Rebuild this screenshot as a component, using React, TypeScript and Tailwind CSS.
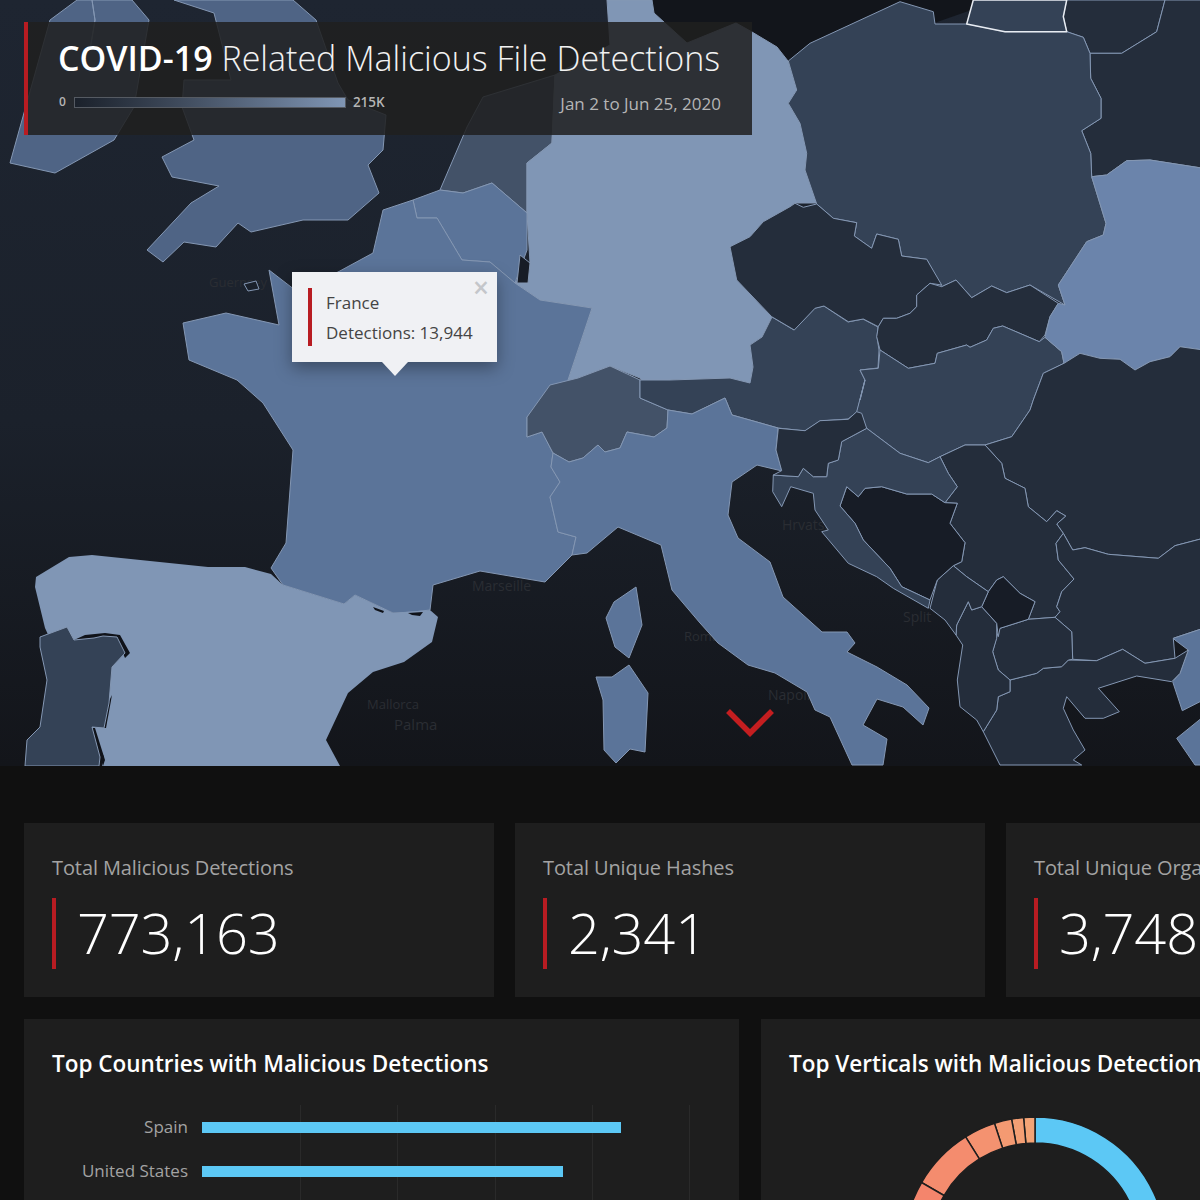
const pts = (s: string, ox: number, oy: number, sx: number, sy: number) =>
  s
    .trim()
    .split(/\s+/)
    .map((p) => {
      const [x, y] = p.split(",").map(Number);
      return `${(ox + x / sx).toFixed(1)},${(oy + y / sy).toFixed(1)}`;
    })
    .join(" ");

const z3 = (s: string) => pts(s, 700, 0, 3, 3);
const z4 = (s: string) => pts(s, 700, 380, 3, 3);

const LIGHT = "#8096b5";
const MID = "#5b7499";
const BLUE = "#6b84ab";
const UK = "#4f6485";
const SWISS = "#435268";
const SLATE = "#344256";
const DARK = "#242d3b";
const DARKEST = "#171c26";
const GAP = "#10131a";

const regions: { fill: string; points: string; stroke?: string }[] = [
  { fill: "#12151b", points: "640,0 1000,0 800,70 788,61 736,23 687,43", stroke: "none" },
  { fill: UK, points: "77,0 50,20 10,163 55,173 114,140 134,107 149,20 132,0" },
  { fill: "none", points: "92,0 95,20 90,50 95,20" },
  { fill: UK, points: "174,0 214,13 231,80 184,80 182,107 194,140 162,157 172,177 219,186 191,203 147,250 163,262 184,242 216,247 238,223 251,232 303,220 348,220 379,193 368,165 383,150 386,115 348,100 338,83 316,20 293,0" },
  { fill: SWISS, points: "483,97 555,75 552,143 527,163 527,213 492,183 463,193 440,190 467,127" },
  { fill: LIGHT, points: "555,75 610,45 607,0 652,0 654,13 687,43 736,23 752,32 777,47 788,61 797,90 788,103 800,123 807,153 805,170 817,203 795,203 790,207 763,222 750,237 730,247 737,280 772,317 762,337 750,345 753,367 750,383 730,378 670,380 645,385 640,378 610,366 578,378 567,383 592,308 540,300 515,283 530,263 527,213 527,163 552,143" },
  { fill: MID, points: "413,200 440,190 463,193 492,183 527,213 527,250 515,283 490,262 462,260 437,218 417,218" },
  { fill: DARKEST, points: "520,255 530,263 528,283 517,283" },
  { fill: MID, points: "413,200 417,218 437,218 462,260 490,262 515,283 540,300 592,308 567,383 551,390 527,417 527,437 542,432 553,453 551,467 560,482 550,497 558,532 576,537 572,555 545,582 480,571 433,585 430,610 413,612 393,613 355,595 344,604 283,585 271,568 286,543 293,450 263,403 237,380 189,360 183,323 226,313 279,325 269,270 295,290 338,272 373,253 383,210" },
  { fill: LIGHT, points: "36,577 69,557 92,555 208,567 245,567 271,574 283,585 344,604 355,595 393,613 430,610 438,617 432,642 404,662 373,672 348,693 326,740 340,766 102,766 104,757 92,730 45,628 35,587", stroke: "none" },
  { fill: GAP, points: "74,640 85,635 105,633 120,635 130,653 125,658 117,640 103,640 94,641", stroke: "none" },
  { fill: GAP, points: "108,703 112,695 106,728 103,728", stroke: "none" },
  { fill: GAP, points: "92,728 95,728 105,760 103,766", stroke: "none" },
  { fill: GAP, points: "373,607 384,611 383,613 375,610", stroke: "none" },
  { fill: GAP, points: "408,613 423,612 420,616 412,615", stroke: "none" },
  { fill: SLATE, points: "40,637 67,627 74,640 94,638 103,636 117,637 125,653 112,667 109,703 104,728 92,727 100,757 99,766 25,766 27,740 40,727 47,680 40,647" },
  { fill: SWISS, points: "527,417 550,385 578,378 610,366 640,380 640,398 668,410 667,428 654,437 627,432 620,448 605,452 598,445 583,458 569,462 553,453 542,432 527,437" },
  { fill: SLATE, points: "640,380 670,380 730,378 750,383 753,367 750,345 762,337 772,317 794,330 815,308 824,306 848,322 863,319 878,327 877,337 879,350 878,368 860,370 865,380 857,412 848,419 820,421 805,431 778,428 732,415 725,398 692,414 668,410 640,398" },
  { fill: MID, points: "553,453 569,462 583,458 598,445 605,452 620,448 627,432 654,437 667,428 668,410 692,414 725,398 732,415 778,428 776,450 782,471 757,465 732,482 728,515 738,538 770,562 783,597 822,632 847,632 855,643 847,652 877,667 907,685 929,708 923,725 903,707 877,699 863,725 887,739 883,765 852,765 830,717 815,710 807,692 775,673 748,665 718,643 700,623 672,590 661,545 618,527 587,553 572,555 576,537 558,532 550,497 560,482 551,467" },
  { fill: MID, points: "636,587 642,625 629,658 615,647 606,618 614,602" },
  { fill: MID, points: "629,665 648,693 645,752 630,749 616,763 604,750 603,700 596,677 612,677" },
  { fill: DARK, points: z3("1100,0 1090,50 1100,95 1150,112 1170,160 1265,160 1370,95 1395,0") },
  { fill: DARK, points: z3("1395,0 1370,95 1265,160 1170,160 1172,235 1203,295 1203,355 1145,392 1172,460 1175,530 1220,525 1280,482 1350,480 1510,505 1510,0") },
  { fill: SLATE, points: z3("265,183 330,130 600,5 700,35 705,72 800,72 915,95 1100,95 1150,112 1170,160 1172,235 1203,295 1203,355 1145,392 1172,460 1175,530 1218,670 1210,705 1160,725 1075,855 1095,915 990,855 920,878 875,858 815,893 768,840 725,860 680,778 605,768 595,718 530,702 515,745 463,708 470,668 400,655 350,612 315,510 320,460 300,370 265,310 290,270") },
  { fill: SLATE, stroke: "#e8ecf2", points: z3("820,0 800,72 915,95 1100,95 1090,50 1100,0") },
  { fill: DARK, points: z3("90,740 150,710 190,665 270,620 285,610 310,622 350,612 400,655 470,668 463,708 515,745 530,702 595,718 605,768 680,778 725,855 690,850 650,885 650,920 630,940 590,955 550,955 535,980 490,957 445,965 372,918 345,925 283,990 215,950 110,840") },
  { fill: DARK, points: z3("725,860 768,840 815,893 875,858 920,878 990,855 1075,910 1050,950 1035,1005 1018,1025 908,978 880,985 860,1020 810,1042 800,1035 712,1060 705,1090 625,1105 540,1050 530,1010 535,980 550,955 590,955 630,940 650,920 650,885 690,850") },
  { fill: SLATE, points: z3("540,1050 625,1105 705,1090 712,1060 800,1035 810,1042 860,1020 880,985 908,978 1018,1025 1035,1012 1085,1055 1092,1090 1030,1120 1000,1200") + " " + z4("990,90 935,170 855,195 795,195 720,230 685,248 600,220 500,145 470,95 495,0") + " " + z3("480,1200 495,1140 480,1110 535,1105") },
  { fill: BLUE, points: z3("1175,530 1220,525 1280,482 1350,480 1510,505 1510,1050 1440,1040 1410,1070 1350,1085 1305,1110 1260,1078 1200,1075 1140,1060 1092,1090 1085,1055 1035,1012 1050,950 1075,910 1095,915 1075,855 1160,725 1210,705 1218,670") },
  { fill: DARK, points: z3("1000,1200 1030,1120 1092,1090 1140,1060 1200,1075 1260,1078 1305,1110 1350,1085 1410,1070 1440,1040 1510,1050 1510,1200") + " " + z4("1510,475 1425,497 1375,535 1225,523 1155,503 1118,510 1090,460 1070,432 1097,408 1070,392 1040,425 985,380 975,325 915,295 905,250 855,195 935,170 990,90") },
  { fill: DARK, points: z4("720,230 795,195 855,195 905,250 915,295 975,325 985,380 1040,425 1070,392 1097,408 1070,432 1090,460 1068,490 1075,540 1122,597 1085,635 1070,680 1080,695 1065,712 985,718 1005,665 960,640 910,590 890,600 865,635 800,590 760,557 785,545 795,488 750,430 772,370 735,368 772,320 745,280") },
  { fill: DARK, points: z4("1090,460 1118,510 1155,503 1225,523 1375,535 1425,497 1510,475 1510,745 1420,775 1425,835 1335,850 1268,808 1190,842 1118,838 1115,755 1065,712 1080,695 1070,680 1085,635 1122,597 1075,540 1068,490") },
  { fill: MID, points: z4("1420,775 1510,745 1510,960 1447,992 1418,905 1440,880 1465,810 1425,780") },
  { fill: MID, points: z4("1430,1075 1510,1010 1510,1155 1485,1155") },
  { fill: DARK, points: z4("930,900 1010,880 1030,865 1085,860 1105,840 1190,842 1268,808 1335,850 1425,835 1465,810 1440,880 1415,905 1310,888 1195,925 1258,995 1210,1015 1155,1015 1100,950 1090,985 1120,1050 1155,1110 1120,1140 1145,1155 900,1155 850,1055 890,990 895,950 930,935") },
  { fill: DARK, points: z4("900,745 985,718 1065,712 1115,755 1118,838 1105,840 1085,860 1030,865 1010,880 930,900 895,870 885,840 878,815 890,770") },
  { fill: DARK, points: z4("770,735 805,665 815,690 845,680 890,730 890,775 878,815 895,870 930,900 930,935 895,950 890,990 850,1055 830,1020 780,980 772,900 788,795 768,765") },
  { fill: DARKEST, points: z4("845,680 865,635 890,600 910,590 960,640 1005,665 985,718 900,745 895,770 890,730") },
  { fill: DARK, points: z4("690,685 712,600 760,557 800,590 865,635 845,680 815,690 805,665 770,735 768,765 735,720") },
  { fill: DARKEST, points: z4("420,378 440,320 475,350 495,325 545,320 620,342 695,342 735,368 772,370 750,430 795,488 785,545 760,557 712,600 690,660 605,620 570,565 490,480 465,430") },
  { fill: SLATE, points: z4("500,145 600,220 685,248 720,230 745,280 772,320 735,368 695,342 620,342 545,320 495,325 475,350 440,320 420,378 465,430 490,480 570,565 605,620 690,660 685,685 580,625 530,590 445,550 365,455 385,450 345,390 340,340 272,320 245,380 218,335 220,285 295,290 310,265 340,290 380,290 385,250 415,240 425,185") },
  { fill: DARK, points: z4("235,145 315,152 360,122 445,118 470,95 485,100 500,145 425,185 415,240 385,250 380,290 340,290 310,265 295,290 220,285 245,272 228,210") },
];

const seaLabels = [
  { text: "Guernsey", x: 209, y: 287, size: 13 },
  { text: "Marseille", x: 472, y: 591, size: 14 },
  { text: "Mallorca", x: 367, y: 709, size: 13 },
  { text: "Palma", x: 394, y: 730, size: 15 },
  { text: "Hrvatska", x: 782, y: 530, size: 14 },
  { text: "Split", x: 903, y: 622, size: 14 },
  { text: "Napoli", x: 768, y: 700, size: 14 },
  { text: "Roma", x: 684, y: 641, size: 13 },
];

function EuropeMap() {
  return (
    <svg viewBox="0 0 1200 766" className="block h-[766px] w-[1200px]">
      <defs>
        <linearGradient id="sea" x1="0" y1="0" x2="0" y2="1">
          <stop offset="0" stopColor="#1e2531" />
          <stop offset="0.55" stopColor="#1b212b" />
          <stop offset="1" stopColor="#13151a" />
        </linearGradient>
      </defs>
      <rect width="1200" height="766" fill="url(#sea)" />
      {seaLabels.map((l) => (
        <text
          key={l.text}
          x={l.x}
          y={l.y}
          fontSize={l.size}
          fill="#2a2d33"
          fontFamily="'Open Sans', sans-serif"
        >
          {l.text}
        </text>
      ))}
      {regions.map((r, i) => (
        <polygon
          key={i}
          points={r.points}
          fill={r.fill}
          stroke={r.stroke ?? "#8497b3"}
          strokeWidth={r.stroke === "#e8ecf2" ? 1.5 : 1}
          strokeLinejoin="round"
        />
      ))}
      <polygon points="244,284 256,281 259,289 248,291" fill="#1b212b" stroke="#8497b3" />
    </svg>
  );
}

function StatCard({ label, value }: { label: string; value: string }) {
  return (
    <div className="h-[174px] w-[470px] shrink-0 bg-[#1e1e1e] pl-[28px] pt-[32px]">
      <div className="whitespace-nowrap text-[20px] leading-[26px] tracking-[-0.1px] text-[#a3a3a3]">{label}</div>
      <div className="mt-[17px] flex h-[71px] items-center border-l-[4px] border-[#b81c22] pb-[4px] pl-[21px] text-[56px] font-light leading-none tracking-[-0.2px] text-white">
        {value}
      </div>
    </div>
  );
}

function polar(r: number, deg: number) {
  const a = (deg * Math.PI) / 180;
  return [150 + r * Math.sin(a), 150 - r * Math.cos(a)];
}

function arc(from: number, to: number) {
  const [x1, y1] = polar(131, from);
  const [x2, y2] = polar(131, to);
  const [x3, y3] = polar(105, to);
  const [x4, y4] = polar(105, from);
  const large = to - from > 180 ? 1 : 0;
  return `M${x1} ${y1}A131 131 0 ${large} 1 ${x2} ${y2}L${x3} ${y3}A105 105 0 ${large} 0 ${x4} ${y4}Z`;
}

const slices = [
  { from: 0, to: 130, color: "#5cc8f5" },
  { from: -5, to: 0, color: "#f4a476" },
  { from: -10.3, to: -5, color: "#f49f74" },
  { from: -18, to: -10.3, color: "#f49a72" },
  { from: -32, to: -18, color: "#f49270" },
  { from: -60, to: -32, color: "#f48c6e" },
  { from: -130, to: -60, color: "#f4856c" },
];

function VerticalsDonut() {
  return (
    <svg viewBox="0 0 300 300" className="ml-[96px] mt-[19px] h-[300px] w-[300px]">
      {slices.map((s) => (
        <path key={s.from} d={arc(s.from, s.to)} fill={s.color} stroke="#1e1e1e" strokeWidth={1.5} />
      ))}
    </svg>
  );
}

function CountryBars() {
  const rows = [
    { name: "Spain", width: 419 },
    { name: "United States", width: 361 },
  ];
  return (
    <div className="relative ml-[-28px] mt-[26px] h-[120px]">
      <div className="absolute bottom-0 left-[178px] top-0 flex w-[488px] justify-between pl-[98px]">
        {[0, 1, 2, 3, 4].map((i) => (
          <div key={i} className="w-px bg-[#2a2a2a]" />
        ))}
      </div>
      <div className="relative flex flex-col gap-[33px] pt-[17px]">
        {rows.map((r) => (
          <div key={r.name} className="flex items-center">
            <div className="mt-[-2px] w-[164px] whitespace-nowrap text-right text-[17px] leading-[11px] text-[#a3a3a3]">
              {r.name}
            </div>
            <div className="ml-[14px] h-[11px] bg-[#5cc8f5]" style={{ width: r.width }} />
          </div>
        ))}
      </div>
    </div>
  );
}

export default function App() {
  return (
    <div className="relative h-[1200px] w-[1200px] overflow-hidden bg-[#101010] font-['Open_Sans',sans-serif]">
      <div className="relative h-[766px]">
        <EuropeMap />

        <div className="absolute left-[24px] top-[22px] h-[113px] w-[728px] border-l-[4px] border-[#b81c22] bg-[rgba(32,32,32,0.86)] pl-[31px] pr-[31px] pt-[16px]">
          <div className="ml-[-1px] whitespace-nowrap text-[34px] font-light leading-[40px] text-[#f2f2f2]">
            <span className="font-semibold text-white">COVID-19</span> Related Malicious File Detections
          </div>
          <div className="mt-[11px] flex h-[26px] items-center text-[#b5b5b5]">
            <span className="text-[12px] font-semibold leading-[16px]">0</span>
            <div className="ml-[8px] h-[11px] w-[272px] border border-[#555a62] bg-gradient-to-r from-[#1b212b] to-[#8096b5]" />
            <span className="ml-[7px] text-[13.5px] font-semibold leading-[16px]">215K</span>
            <span className="ml-auto mt-[3px] text-[17px] leading-[22px]">Jan 2 to Jun 25, 2020</span>
          </div>
        </div>

        <div className="absolute left-[292px] top-[272px] h-[90px] w-[205px] bg-[#f0f1f4] shadow-[0_6px_16px_rgba(0,0,0,0.35)]">
          <div className="absolute left-[16px] top-[16px] h-[58px] w-[4px] bg-[#b81c22]" />
          <div className="absolute left-[34px] top-[19px] text-[17px] leading-[24px] text-[#444]">France</div>
          <div className="absolute left-[34px] top-[49px] whitespace-nowrap text-[17px] leading-[24px] text-[#444]">
            Detections: 13,944
          </div>
          <div className="absolute right-[8px] top-[1px] text-[28px] font-semibold leading-[28px] text-[#c4c6ca]">×</div>
          <div className="absolute left-[90px] top-[90px] h-0 w-0 border-x-[13px] border-t-[14px] border-x-transparent border-t-[#f0f1f4]" />
        </div>

        <svg viewBox="0 0 52 34" className="absolute left-[724px] top-[706px] h-[34px] w-[52px]">
          <path d="M4 5L26 27L48 5" fill="none" stroke="#c41e20" strokeWidth={5.5} />
        </svg>
      </div>

      <div className="flex gap-[21px] pl-[24px] pt-[57px]">
        <StatCard label="Total Malicious Detections" value="773,163" />
        <StatCard label="Total Unique Hashes" value="2,341" />
        <StatCard label="Total Unique Organizations" value="3,748" />
      </div>

      <div className="flex gap-[22px] pl-[24px] pt-[22px]">
        <div className="h-[300px] w-[715px] shrink-0 bg-[#1e1e1e] pl-[28px] pt-[30px]">
          <div className="whitespace-nowrap text-[22.5px] font-semibold leading-[30px] text-white">
            Top Countries with Malicious Detections
          </div>
          <CountryBars />
        </div>
        <div className="h-[300px] w-[715px] shrink-0 bg-[#1e1e1e] pl-[28px] pt-[30px]">
          <div className="whitespace-nowrap text-[22.5px] font-semibold leading-[30px] text-white">
            Top Verticals with Malicious Detections
          </div>
          <VerticalsDonut />
        </div>
      </div>
    </div>
  );
}
